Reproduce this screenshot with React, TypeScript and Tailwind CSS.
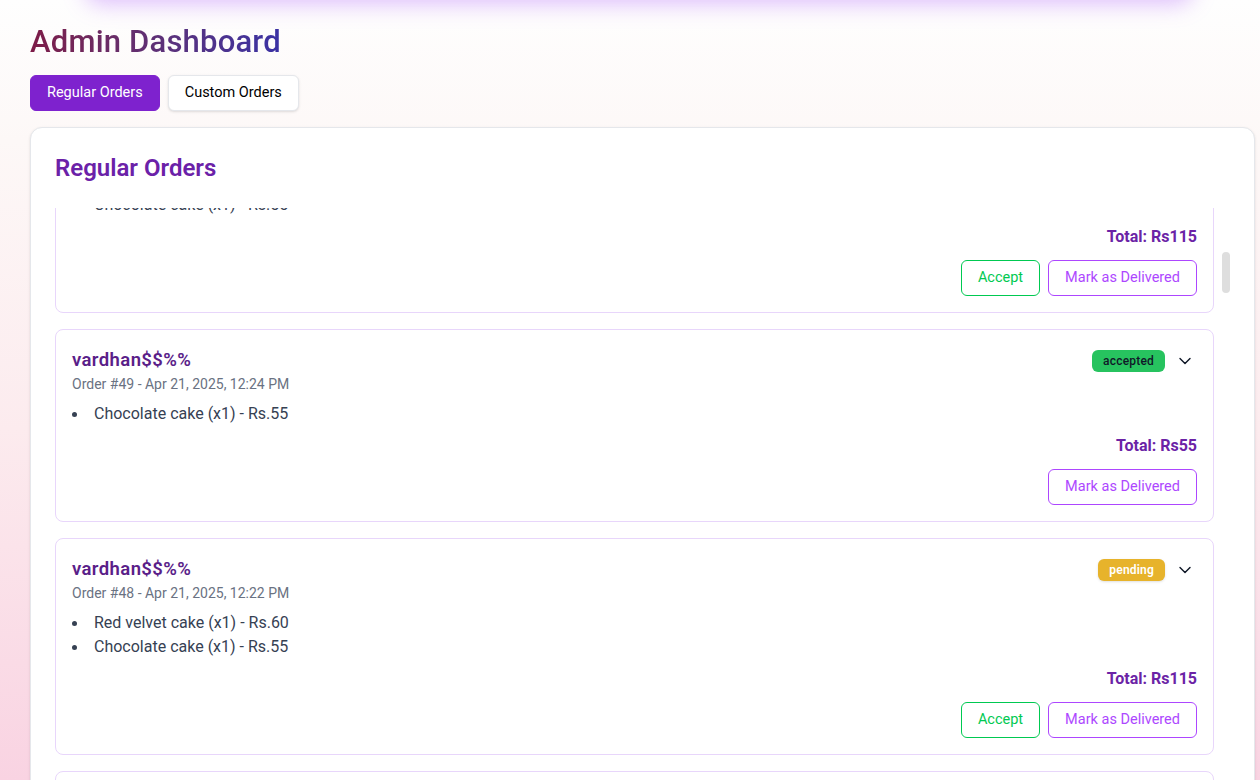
import { ChevronDown } from "lucide-react";

type Item = { name: string; qty: number; price: number };
type Order = { id: number; date: string; status: "pending" | "accepted"; items: Item[] };

const orders: Order[] = [
  {
    id: 50,
    date: "Apr 21, 2025, 12:30 PM",
    status: "pending",
    items: [
      { name: "Red velvet cake", qty: 1, price: 60 },
      { name: "Chocolate cake", qty: 1, price: 55 },
    ],
  },
  {
    id: 49,
    date: "Apr 21, 2025, 12:24 PM",
    status: "accepted",
    items: [{ name: "Chocolate cake", qty: 1, price: 55 }],
  },
  {
    id: 48,
    date: "Apr 21, 2025, 12:22 PM",
    status: "pending",
    items: [
      { name: "Red velvet cake", qty: 1, price: 60 },
      { name: "Chocolate cake", qty: 1, price: 55 },
    ],
  },
  {
    id: 47,
    date: "Apr 21, 2025, 12:20 PM",
    status: "pending",
    items: [{ name: "Red velvet cake", qty: 1, price: 60 }],
  },
];

function StatusBadge({ status }: { status: Order["status"] }) {
  if (status === "accepted") {
    return (
      <span className="rounded-md bg-[#27c35f] px-[11px] py-[3px] text-xs font-medium leading-4 tracking-[0.2px] text-gray-900">
        accepted
      </span>
    );
  }
  return (
    <span className="rounded-md bg-[#e7b32b] px-[11px] py-[3px] text-xs font-semibold leading-4 tracking-[0.2px] text-white shadow-sm">
      pending
    </span>
  );
}

function OrderCard({ order }: { order: Order }) {
  const total = order.items.reduce((s, i) => s + i.price * i.qty, 0);
  return (
    <div className="rounded-lg border border-[#e8d6fb] bg-white p-4">
      <div className="flex items-start justify-between">
        <div>
          <h3 className="text-[18.5px] font-semibold leading-7 tracking-[0.4px] text-[#5a1e89]">vardhan$$%%</h3>
          <p className="text-sm leading-5 text-gray-500">
            Order #{order.id} - {order.date}
          </p>
        </div>
        <div className="mt-[3px] flex items-center gap-2">
          <StatusBadge status={order.status} />
          <span className="flex h-6 w-6 items-center justify-center text-gray-900">
            <ChevronDown size={20} strokeWidth={1.7} />
          </span>
        </div>
      </div>
      <ul className="mt-2 text-base leading-6 text-gray-700">
        {order.items.map((it) => (
          <li key={it.name} className="flex items-center">
            <span className="mr-[17px] h-[5px] w-[5px] rounded-full bg-gray-700" />
            <span>
              {it.name} (x{it.qty}) - Rs.{it.price}
            </span>
          </li>
        ))}
      </ul>
      <p className="mt-2 text-right text-base font-bold leading-6 text-[#6b23a6]">Total: Rs{total}</p>
      <div className="mt-[11px] flex justify-end gap-2">
        {order.status === "pending" && (
          <button className="rounded-md border border-green-500 bg-white px-4 py-[7px] text-[14.5px] leading-5 text-green-500">
            Accept
          </button>
        )}
        <button className="rounded-md border border-purple-500 bg-white px-4 py-[7px] text-[14.5px] leading-5 text-purple-500">
          Mark as Delivered
        </button>
      </div>
    </div>
  );
}

export default function App() {
  return (
    <div className="h-[780px] overflow-hidden bg-[linear-gradient(180deg,#fefefe_0%,#fdf8f7_18%,#fcebee_55%,#f9d3e2_100%)] pl-[30px] pr-[5px] font-['Roboto','Liberation_Sans',sans-serif]">
      <nav className="-mt-16 ml-[55px] mr-[62px] h-16 rounded-b-2xl bg-white shadow-[0_4px_22px_rgba(168,85,247,0.38)]" />
      <h1 className="mt-6 inline-block bg-linear-to-r from-[#7d1a47] to-[#3a31a4] bg-clip-text text-[31px] font-medium leading-9 tracking-[0.2px] text-transparent">
        Admin Dashboard
      </h1>
      <div className="mt-[15px] flex gap-2">
        <button className="rounded-md border border-[#7e22ce] bg-[#7e22ce] px-4 py-[7px] text-[14.5px] leading-5 text-white">
          Regular Orders
        </button>
        <button className="rounded-md border border-gray-200 bg-white px-4 py-[7px] text-[14.5px] leading-5 text-black shadow-sm">
          Custom Orders
        </button>
      </div>
      <div className="mt-4 rounded-xl border border-gray-200 bg-white p-6 shadow-sm">
        <h2 className="text-2xl font-semibold leading-8 text-[#6b21a8]">Regular Orders</h2>
        <div className="relative mt-6 h-[700px] overflow-hidden pr-4">
          <div className="-mt-[112px] flex flex-col gap-4">
            {orders.map((o) => (
              <OrderCard key={o.id} order={o} />
            ))}
          </div>
          <div className="absolute right-0 top-[44px] h-[41px] w-2 rounded-full bg-[#dedede]" />
        </div>
      </div>
    </div>
  );
}
